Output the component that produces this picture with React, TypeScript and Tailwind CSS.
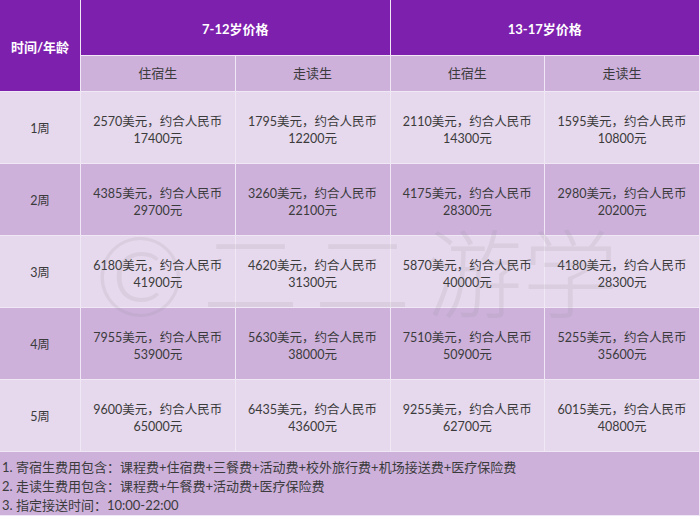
const rows = [
  ["1周", ["2570", "17400"], ["1795", "12200"], ["2110", "14300"], ["1595", "10800"]],
  ["2周", ["4385", "29700"], ["3260", "22100"], ["4175", "28300"], ["2980", "20200"]],
  ["3周", ["6180", "41900"], ["4620", "31300"], ["5870", "40000"], ["4180", "28300"]],
  ["4周", ["7955", "53900"], ["5630", "38000"], ["7510", "50900"], ["5255", "35600"]],
  ["5周", ["9600", "65000"], ["6435", "43600"], ["9255", "62700"], ["6015", "40800"]],
] as const;

const font = { fontFamily: '"Lato", "Noto Sans CJK SC", sans-serif' };

export default function App() {
  return (
    <div className="relative h-[516px] w-[700px] overflow-hidden bg-[#f1e8f5]" style={font}>
      <div className="grid grid-cols-[80px_repeat(4,1fr)] grid-rows-[55px_35px_repeat(5,71px)_63px] gap-px pr-px pb-px text-[12.5px] text-[#3b3b3b]">
        <div className="row-span-2 flex items-center justify-center bg-[#7e20ae] pt-1 text-[13px] font-bold text-white">
          时间/年龄
        </div>
        <div className="col-span-2 flex items-center justify-center bg-[#7e20ae] pt-1 text-[13px] font-bold text-white">
          7-12岁价格
        </div>
        <div className="col-span-2 flex items-center justify-center bg-[#7e20ae] pt-1 text-[13px] font-bold text-white">
          13-17岁价格
        </div>
        {["住宿生", "走读生", "住宿生", "走读生"].map((t, i) => (
          <div key={i} className="flex items-center justify-center bg-[#cdb1db] pt-px text-[13px]">
            {t}
          </div>
        ))}
        {rows.map(([week, ...cells], r) => {
          const bg = r % 2 === 0 ? "bg-[#e6d8ed]" : "bg-[#cdb1db]";
          return [
            <div key={week} className={`flex items-center justify-center pt-1 ${bg}`}>
              {week}
            </div>,
            ...cells.map(([usd, rmb], c) => (
              <div
                key={`${week}-${c}`}
                className={`flex flex-col items-center justify-center pt-1 leading-[17px] ${bg}`}
              >
                <span>{usd}美元，约合人民币</span>
                <span>{rmb}元</span>
              </div>
            )),
          ];
        })}
        <div className="col-span-5 bg-[#cdb1db] pl-[2px] pt-[6px] text-[13px] leading-[19px]">
          <p>1. 寄宿生费用包含：课程费+住宿费+三餐费+活动费+校外旅行费+机场接送费+医疗保险费</p>
          <p>2. 走读生费用包含：课程费+午餐费+活动费+医疗保险费</p>
          <p>3. 指定接送时间：10:00-22:00</p>
        </div>
      </div>
      <div className="pointer-events-none absolute left-[94px] top-[218px] flex items-center gap-[16px] text-[96px] leading-none font-light text-[#8a8a8a] opacity-[0.13]">
        <span className="text-[110px]">©</span>
        <span>二</span>
        <span>二</span>
        <span>游学</span>
      </div>
    </div>
  );
}
